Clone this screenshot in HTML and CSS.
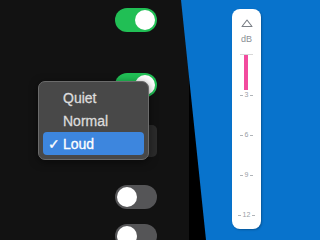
FILE: index.html
```html
<!DOCTYPE html>
<html>
<head>
<meta charset="utf-8">
<link rel="stylesheet" href="styles.css">
</head>
<body>
<div class="stage">
  <div class="dark-panel">
    <div class="controls">
      <div class="toggle on tg1"><span class="knob"></span></div>
      <div class="toggle on tg2"><span class="knob"></span></div>
      <div class="popup"></div>
      <div class="toggle off tg3"><span class="knob"></span></div>
      <div class="toggle off tg4"><span class="knob"></span></div>
    </div>
    <div class="menu">
      <div class="item"><span class="check"></span>Quiet</div>
      <div class="item"><span class="check"></span>Normal</div>
      <div class="item selected"><span class="check">✓</span>Loud</div>
    </div>
  </div>
  <div class="blue-panel">
    <div class="meter">
      <svg class="arrow" width="12" height="8" viewBox="0 0 12 8"><path d="M1 7.5 L6 1 L11 7.5 Z" fill="none" stroke="#7a7f86" stroke-width="1.1" stroke-linejoin="round"/></svg>
      <div class="unit">dB</div>
      <div class="scale">
        <div class="zero"></div>
        <div class="bar"></div>
        <div class="tick m3">3</div>
        <div class="tick m6">6</div>
        <div class="tick m9">9</div>
        <div class="tick m12">12</div>
      </div>
    </div>
  </div>
</div>
</body>
</html>
```
FILE: styles.css
```css
html, body {
  margin: 0;
  padding: 0;
}
body {
  width: 320px;
  height: 240px;
  overflow: hidden;
  background: #000;
  font-family: "Liberation Sans", Arial, sans-serif;
}
.stage {
  display: grid;
  width: 320px;
  height: 240px;
}
.dark-panel, .blue-panel {
  grid-area: 1 / 1;
}
.dark-panel {
  position: relative;
  width: 189px;
  height: 240px;
  background: #121212;
}
.controls {
  width: 157px;
  display: flex;
  flex-direction: column;
  align-items: flex-end;
  padding-top: 8px;
}
.toggle {
  width: 42px;
  height: 24px;
  border-radius: 12px;
  box-sizing: border-box;
  padding: 2px;
  display: flex;
  flex-shrink: 0;
}
.toggle.on {
  background: #21bf55;
  justify-content: flex-end;
}
.toggle.off {
  background: #555557;
  justify-content: flex-start;
}
.knob {
  width: 20px;
  height: 20px;
  border-radius: 50%;
  background: #fff;
}
.tg2 { margin-top: 41px; }
.popup {
  margin-top: 28px;
  width: 44px;
  height: 32px;
  border-radius: 5px;
  background: #2b2b2b;
  flex-shrink: 0;
}
.tg3 { margin-top: 28px; }
.tg4 { margin-top: 15px; }
.menu {
  position: absolute;
  left: 38px;
  top: 81px;
  width: 111px;
  box-sizing: border-box;
  padding: 4px;
  background: #484848;
  border: 1px solid #6b6b6b;
  border-radius: 7px;
  box-shadow: 0 2px 8px rgba(0,0,0,0.5);
}
.item {
  height: 23px;
  display: flex;
  align-items: center;
  font-size: 14px;
  color: #dcdcdc;
  border-radius: 4px;
  padding-left: 5px;
  -webkit-text-stroke: 0.3px currentColor;
}
.item.selected {
  background: #3d86de;
  color: #fff;
}
.check {
  width: 15px;
  font-size: 14px;
}
.blue-panel {
  background: #0873cc;
  clip-path: polygon(181px 0, 100% 0, 100% 100%, 206px 100%);
  display: flex;
  justify-content: flex-end;
  align-items: flex-start;
  padding: 9px 59px 0 0;
}
.meter {
  width: 29px;
  height: 220px;
  background: #fff;
  border-radius: 8px;
  box-shadow: 1px 1px 2px rgba(0,0,0,0.25);
  display: flex;
  flex-direction: column;
  align-items: center;
  padding-top: 10px;
  box-sizing: border-box;
}
.arrow {
  display: block;
}
.unit {
  margin-top: 7px;
  font-size: 9px;
  color: #8a8f96;
  line-height: 10px;
}
.scale {
  position: relative;
  width: 29px;
  flex: 1;
  margin-top: 10px;
}
.zero {
  position: absolute;
  left: 8px;
  width: 13px;
  top: 0;
  height: 1px;
  background: #d8d8d8;
}
.bar {
  position: absolute;
  left: 12px;
  width: 4px;
  top: 1px;
  height: 35px;
  background: #f24b9e;
}
.tick {
  position: absolute;
  left: 0;
  width: 29px;
  text-align: center;
  font-size: 7px;
  line-height: 8px;
  color: #9aa0a6;
}
.tick::before, .tick::after {
  content: "";
  display: inline-block;
  width: 3px;
  height: 1px;
  background: #b0b4b8;
  vertical-align: middle;
  margin: 0 2px;
}
.m3 { top: 37px; }
.m6 { top: 77px; }
.m9 { top: 117px; }
.m12 { top: 157px; }
```
